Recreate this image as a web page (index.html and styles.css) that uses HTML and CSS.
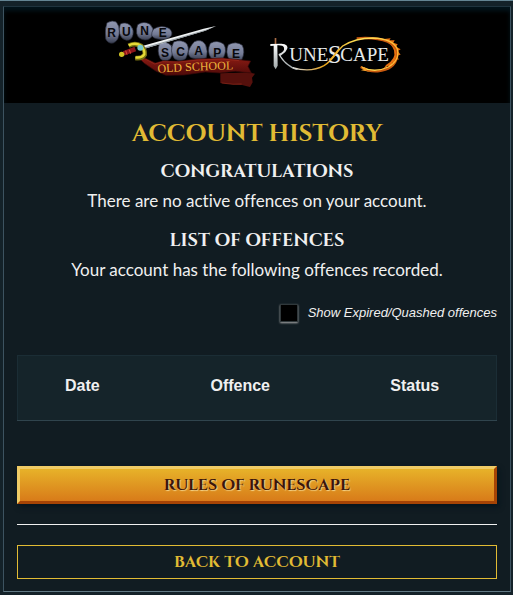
FILE: index.html
```html
<!DOCTYPE html>
<html lang="en">
<head>
    <meta charset="UTF-8">
    <meta name="viewport" content="width=device-width, initial-scale=1.0">
    <title>Account History</title>
    <link rel="stylesheet" href="styles.css">
</head>
<body>
    <div class="frame">
        <header class="header">
            <a href="#" aria-label="Old School RuneScape">
                <svg class="logo-oldschool" viewBox="30 27 456 216">
                    <defs>
                        <linearGradient id="stone" x1="0" y1="0" x2="0" y2="1">
                            <stop offset="0" stop-color="#9097b0"/>
                            <stop offset="0.6" stop-color="#737a94"/>
                            <stop offset="1" stop-color="#3b4052"/>
                        </linearGradient>
                        <linearGradient id="ribbon" x1="0" y1="0" x2="0" y2="1">
                            <stop offset="0" stop-color="#8d1c14"/>
                            <stop offset="1" stop-color="#4e0a09"/>
                        </linearGradient>
                    </defs>
                    <!-- stones -->
                    <g fill="url(#stone)" stroke="#252938" stroke-width="2">
                        <path d="M36 38q16-9 28-2 10 12 9 28 0 28-18 35-16 3-23-12-4-28 4-49z"/>
                        <path d="M76 42q16-8 30 4 12 14 8 28-4 18-20 17-16-4-20-20-3-16 2-29z"/>
                        <path d="M128 44q18-12 36-2 14 12 10 30-6 18-24 18-22-2-25-20-2-14 3-26z"/>
                        <path d="M176 57q22-14 46-2 14 12 6 24-12 12-34 9-20-2-24-12-1-10 6-19z"/>
                        <path d="M194 100q20-8 34 6 12 18-2 40-16 14-30 0-12-22-2-46z"/>
                        <path d="M236 96q24-10 40 6 10 18-4 44-16 12-34 0-16-22-2-50z"/>
                        <path d="M298 95q22-10 34 10 8 20 2 38-16 9-46 0-14-10-4-28 6-12 14-20z"/>
                        <path d="M346 100q20-12 40 2 12 18-2 44-18 10-36-2-14-20-2-44z"/>
                        <path d="M400 104q24-12 42 2 10 20-2 44-18 12-38-2-12-22-2-44z"/>
                    </g>
                    <g class="rune-letters" text-anchor="middle">
                        <text x="50" y="82">R</text>
                        <text x="94" y="78">U</text>
                        <text x="149" y="76">N</text>
                        <text x="203" y="81">E</text>
                        <text x="210" y="140">S</text>
                        <text x="257" y="139">C</text>
                        <text x="311" y="135">A</text>
                        <text x="367" y="140">P</text>
                        <text x="423" y="143">E</text>
                    </g>
                    <!-- ribbon -->
                    <path fill="#55100c" d="M376 190l52-2 30-1 22 4-9 12 2 14-8 14-24-6-28-2-37-4z"/>
                    <path fill="url(#ribbon)" stroke="#3a0808" stroke-width="2" d="M127 140l24 5 30 14 24-7 45 2 56-7 78-3 49 5 34 4-8 16 10 20-48-5-46 5-44-3-64 9-54 1-31-13-34-23z"/>
                    <path fill="none" stroke="#9c2c1c" stroke-width="2" d="M151 147l28 15 24-7 47 1 60-6 72-3 50 5M380 219l34 4 26-1"/>
                    <path id="oldschool-line" fill="none" d="M188 188Q310 180 434 178"/>
                    <text class="ribbon-text"><textPath href="#oldschool-line">OLD SCHOOL</textPath></text>
                    <!-- sword -->
                    <path fill="#eef1f2" d="M142 108L326 56l37-8-32 14-185 55z"/>
                    <path fill="#8e979d" d="M145 113L331 60l32-12-32 14-185 55z"/>
                    <path fill="none" stroke="#8c161b" stroke-width="14" d="M86 130l35-13"/>
                    <path fill="none" stroke="#e04b35" stroke-width="3" d="M92 122l4 12m7-15l4 12"/>
                    <circle cx="80" cy="133" r="8" fill="#d1c324"/>
                    <path fill="none" stroke="#776f12" stroke-width="14" d="M101 107q20-10 38 1 12 13 10 26-8 13-28 10"/>
                    <path fill="none" stroke="#e6da36" stroke-width="7" d="M101 106q20-10 37 1 12 13 10 26-8 12-27 9"/>
                    <circle cx="136" cy="113" r="9" fill="#78c9c8"/>
                </svg>
            </a>
            <a href="#" aria-label="RuneScape">
                <svg class="logo-runescape" viewBox="30 30 417 120">
                    <defs>
                        <linearGradient id="flame" x1="0" y1="0" x2="1" y2="0">
                            <stop offset="0" stop-color="#ededed"/>
                            <stop offset="0.12" stop-color="#d4bd90"/>
                            <stop offset="0.3" stop-color="#e9a419"/>
                            <stop offset="0.65" stop-color="#ffe35c"/>
                            <stop offset="1" stop-color="#ffb732"/>
                        </linearGradient>
                        <linearGradient id="steel" x1="0" y1="0" x2="0" y2="1">
                            <stop offset="0" stop-color="#ffffff"/>
                            <stop offset="1" stop-color="#9ba3a5"/>
                        </linearGradient>
                    </defs>
                    <!-- sword stem of the R -->
                    <path fill="#a76b45" d="M44 39h5v19h-5z"/>
                    <path fill="url(#steel)" d="M31 57l33-1 10 2q16 7 2 23l-14 11q20 31 55 42l-9 1Q75 123 56 90v-3q19-7 16-19-3-8-20-7l1 61-6 11-6-10V62l-10 1z"/>
                    <!-- flaming swoosh -->
                    <path fill="#e8700f" d="M372 42l20-2-4 6 16 0-4 7 13 5-5 7 14 8-9 5 9 11-10 2 4 13-8-2-1 12-9-1-7 12-6-3-14 9 7-11q31-17 24-44-7-20-30-34z"/>
                    <path fill="none" stroke="#c9590e" stroke-width="7" d="M290 40q60-4 93 10 36 17 28 46-7 37-58 43-26 2-51-13"/>
                    <path fill="none" stroke="url(#flame)" stroke-width="4" d="M98 128q54 16 94-6c29-18 32-36 56-59q38-24 91-24 59 2 73 33 8 34-27 54-40 19-79 1"/>
                    <path fill="#f9a52a" d="M301 123l19 7-3 6 16 5-30-5 10-4z"/>
                    <g class="logo-letters">
                        <text x="88" y="109">UNE</text>
                        <text class="logo-s" x="203" y="114">S</text>
                        <text x="241" y="109">CAPE</text>
                    </g>
                    <path fill="none" stroke="#f0b32d" stroke-width="5" d="M208 108q14-15 29-36"/>
                </svg>
            </a>
        </header>
        <main class="content">
            <h1>Account History</h1>
            <section>
                <h2>Congratulations</h2>
                <p>There are no active offences on your account.</p>
            </section>
            <section>
                <h2>List of Offences</h2>
                <p>Your account has the following offences recorded.</p>
            </section>
            <div class="filter">
                <input type="checkbox" id="show_expired" name="show_expired">
                <label for="show_expired">Show Expired/Quashed offences</label>
            </div>
            <table class="offences">
                <thead>
                    <tr>
                        <th class="col-date">Date</th>
                        <th class="col-offence">Offence</th>
                        <th class="col-status">Status</th>
                    </tr>
                </thead>
            </table>
            <a class="btn btn-gold" href="#">Rules of RuneScape</a>
            <hr>
            <a class="btn btn-outline" href="#">Back to Account</a>
        </main>
    </div>
</body>
</html>
```
FILE: styles.css
```css
* {
    box-sizing: border-box;
}
body {
    margin: 0;
    padding: 5px 2px 2px 3px;
    border-top: 1px solid #648593;
    background-color: #142229;
    color: #f0f0f0;
    font-family: Lato, sans-serif;
    font-size: 16px;
}
.frame {
    border: 1px solid #3d5360;
    border-top-color: #1f343e;
    border-bottom-color: #617984;
    background-color: #111c22;
}
.header {
    display: flex;
    justify-content: center;
    align-items: center;
    gap: 13px;
    height: 96px;
    background-color: #000;
    box-shadow: inset 0 4px 4px #03141b;
}
.header svg {
    display: block;
}
.logo-oldschool {
    width: 152px;
    height: 72px;
}
.logo-runescape {
    width: 139px;
    height: 40px;
}
.rune-letters {
    font: bold 36px "Liberation Sans", sans-serif;
    fill: #08080c;
}
.ribbon-text {
    font: 36px "Liberation Serif", serif;
    fill: #edb43b;
}
.logo-letters {
    font: 57px "Liberation Serif", serif;
    fill: #e6eaea;
}
.logo-s {
    font-size: 74px;
}
.content {
    padding: 15px 13px 12px;
    text-align: center;
}
h1, h2, .btn {
    font-family: Cinzel, "Liberation Serif", serif;
    font-weight: bold;
    text-transform: uppercase;
}
h1 {
    margin: 0 0 8px;
    font-size: 24px;
    line-height: 32px;
    color: #e1bb34;
}
h2 {
    margin: 0;
    font-size: 18px;
    line-height: 28px;
}
p {
    margin: 0 0 11px;
    font-size: 17px;
    line-height: 30px;
    font-variant-ligatures: none;
}
.filter {
    display: flex;
    justify-content: flex-end;
    align-items: center;
    gap: 10px;
    margin: 16px 0 30px;
    font: italic 13px/24px "Liberation Sans", sans-serif;
}
.filter input {
    appearance: none;
    width: 18px;
    height: 18px;
    margin: 0;
    border: 1px solid #30383b;
    background-color: #000;
    box-shadow: 0 1px 2px #aaa;
}
.filter input:checked {
    background-color: #e1bb34;
}
.offences {
    width: 100%;
    margin-bottom: 45px;
    border: 1px solid #1b2d35;
    border-bottom-color: #30444d;
    border-collapse: collapse;
    background-color: #15242a;
    font-family: "Liberation Sans", sans-serif;
}
.offences th {
    padding: 20px 0 24px;
    line-height: 20px;
}
.col-date {
    width: 27%;
}
.col-offence {
    width: 39%;
}
.col-status {
    width: 34%;
}
.btn {
    display: block;
    font-size: 16px;
    text-decoration: none;
}
.btn-gold {
    border: 3px solid #a54405;
    border-top-color: #f0cb65;
    border-left-color: #f0cb65;
    background: linear-gradient(#e7b229, #d87b19);
    box-shadow: 2px 3px 5px #05151d;
    color: #3b160c;
    line-height: 32px;
    text-shadow: 1px 1px 1px #f3d38a;
}
.btn-outline {
    border: 1px solid #e1bb34;
    color: #e1bb34;
    line-height: 32px;
}
.btn:hover {
    filter: brightness(1.1);
}
hr {
    margin: 20px 0;
    border: 0;
    border-top: 1px solid #f0f0f0;
}
```
